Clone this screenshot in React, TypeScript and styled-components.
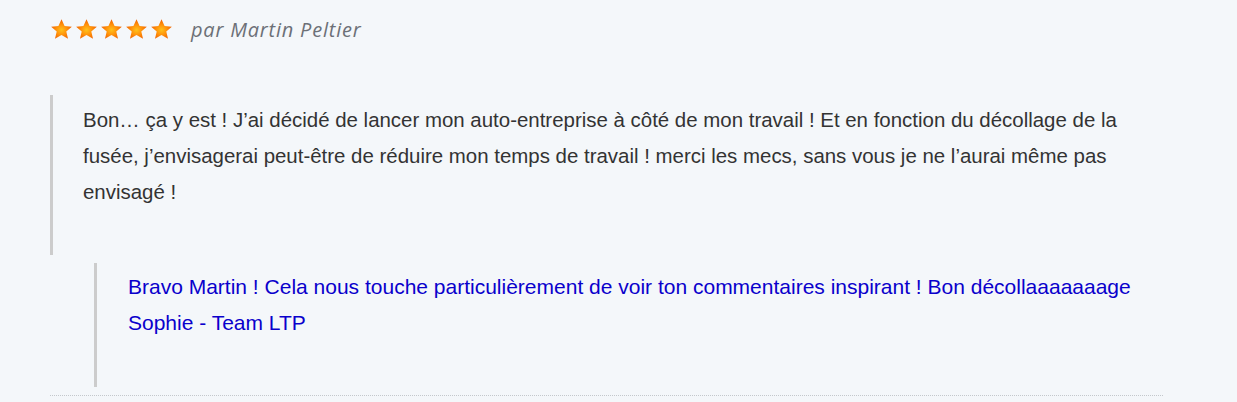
import React, { FunctionComponent } from "react";
import styled, { createGlobalStyle } from "styled-components";

const GlobalStyle = createGlobalStyle`
  body {
    margin: 0;
    background-color: #f4f7fa;
  }
`;

const StyledPage = styled.div`
  background-color: #f4f7fa;
  height: 402px;
  padding: 15px 74px 0 50px;
  box-sizing: border-box;
`;

const StyledHeader = styled.div`
  align-items: center;
  display: flex;
  height: 28px;
`;

const StyledStars = styled.div`
  display: flex;
  gap: 2px;
  margin-right: 18px;
`;

const StyledAuthor = styled.span`
  color: #6c7077;
  font-family: "Open Sans", Lato, sans-serif;
  font-size: 20px;
  font-style: italic;
  letter-spacing: 0.8px;
`;

const StyledQuote = styled.blockquote<{ $reply?: boolean }>`
  border-left: 3px solid #cccccc;
  color: ${({ $reply }) => ($reply ? "#0a00cc" : "#333333")};
  font-family: "Liberation Sans", Arial, sans-serif;
  font-size: ${({ $reply }) => ($reply ? "21px" : "20.45px")};
  line-height: 36px;
  margin: ${({ $reply }) => ($reply ? "8px 0 0 44px" : "52px 0 0 0")};
  padding: ${({ $reply }) => ($reply ? "6px 0 46px 31px" : "7px 0 45px 30px")};

  > p {
    margin: 0;
  }
`;

const StyledDivider = styled.div`
  border-bottom: 1px dotted #c4c8cc;
  margin-top: 8px;
`;

const Star: FunctionComponent<{ id: number }> = ({ id }) => (
  <svg width="23" height="23" viewBox="0 0 24 24">
    <defs>
      <radialGradient id={`starGrad${id}`} cx="50%" cy="55%" r="55%">
        <stop offset="0%" stopColor="#ffc21a" />
        <stop offset="50%" stopColor="#ff8f0a" />
        <stop offset="100%" stopColor="#ee5f00" />
      </radialGradient>
    </defs>
    <path
      d="M12 1.2l3.2 7.1 7.6.7-5.8 5.1 1.8 7.6L12 17.7l-6.8 4 1.8-7.6-5.8-5.1 7.6-.7z"
      fill={`url(#starGrad${id})`}
    />
  </svg>
);

const App: FunctionComponent = () => (
  <StyledPage>
    <GlobalStyle />
    <StyledHeader>
      <StyledStars>
        {[0, 1, 2, 3, 4].map((i) => (
          <Star key={i} id={i} />
        ))}
      </StyledStars>
      <StyledAuthor>par Martin Peltier</StyledAuthor>
    </StyledHeader>
    <StyledQuote>
      <p>
        Bon… ça y est ! J’ai décidé de lancer mon auto-entreprise à côté de mon
        travail ! Et en fonction du décollage de la fusée, j’envisagerai
        peut-être de réduire mon temps de travail ! merci les mecs, sans vous je
        ne l’aurai même pas envisagé !
      </p>
    </StyledQuote>
    <StyledQuote $reply>
      <p>
        Bravo Martin ! Cela nous touche particulièrement de voir ton
        commentaires inspirant ! Bon décollaaaaaaage
        <br />
        Sophie - Team LTP
      </p>
    </StyledQuote>
    <StyledDivider />
  </StyledPage>
);

export default App;
